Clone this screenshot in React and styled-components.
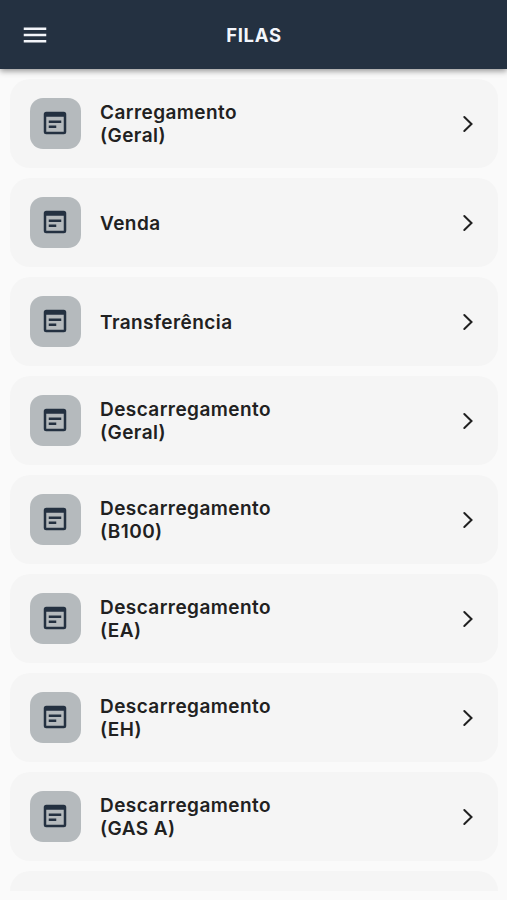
import React from 'react';
import styled, { createGlobalStyle } from 'styled-components';

const GlobalStyle = createGlobalStyle`
  * {
    box-sizing: border-box;
  }

  body {
    margin: 0;
    background: #fafafa;
    font-family: Inter, 'Liberation Sans', sans-serif;
  }
`;

const Screen = styled.div`
  display: flex;
  flex-direction: column;
  height: 900px;
  padding-bottom: 9px;
  overflow: hidden;
`;

const Header = styled.header`
  position: relative;
  z-index: 1;
  flex: none;
  display: grid;
  grid-template-columns: 70px 1fr 69px;
  align-items: center;
  height: 69px;
  padding-top: 1px;
  background: #243141;
  box-shadow: 0 2px 6px rgba(0, 0, 0, 0.42);
`;

const MenuButton = styled.button`
  display: flex;
  justify-content: center;
  padding: 0;
  border: 0;
  background: none;
  color: #f3f5fa;
`;

const Title = styled.h1`
  margin: 0;
  color: #f3f6fc;
  font-size: 18.5px;
  font-weight: 650;
  line-height: 24px;
  letter-spacing: 0.7px;
  text-align: center;
`;

const List = styled.ul`
  flex: 1;
  min-height: 0;
  display: flex;
  flex-direction: column;
  gap: 10px;
  margin: 0;
  padding: 10px 9px 0 10px;
  overflow: hidden;
  list-style: none;
`;

const Card = styled.li`
  flex: none;
  display: flex;
  align-items: center;
  height: 89px;
  padding: 0 15px 0 20px;
  border-radius: 20px;
  background: #f5f5f5;
`;

const IconBox = styled.span`
  flex: none;
  display: flex;
  align-items: center;
  justify-content: center;
  width: 50.5px;
  height: 51px;
  margin-bottom: 1px;
  border-radius: 13px;
  background: #b5babd;
  color: #243141;
`;

const Label = styled.span`
  width: 200px;
  margin-left: 19.5px;
  margin-right: auto;
  padding-top: 1px;
  color: #212121;
  font-size: 19px;
  font-weight: 630;
  line-height: 23px;
  letter-spacing: 0.43px;
`;

const Chevron = styled.svg`
  flex: none;
  width: 30px;
  height: 30px;
  fill: none;
  stroke: #202020;
  stroke-width: 2;
  stroke-linecap: round;
`;

const queues = [
  'Carregamento (Geral)',
  'Venda',
  'Transferência',
  'Descarregamento (Geral)',
  'Descarregamento (B100)',
  'Descarregamento (EA)',
  'Descarregamento (EH)',
  'Descarregamento (GAS A)'
];

function MenuIcon() {
  return (
    <svg width="30" height="30" viewBox="0 0 24 24" fill="currentColor">
      <path d="M3 18h18v-2H3v2zm0-5h18v-2H3v2zm0-7v2h18V6H3z" />
    </svg>
  );
}

function QueueIcon() {
  return (
    <svg width="30" height="30" viewBox="0 0 24 24" fill="currentColor">
      <path d="M19 3H5a2 2 0 0 0-2 2v14a2 2 0 0 0 2 2h14a2 2 0 0 0 2-2V5a2 2 0 0 0-2-2zm0 16H5V7h14v12zm-2-7H7v-2h10v2zm-4 4H7v-2h6v2z" />
    </svg>
  );
}

function QueueItem({ name }) {
  return (
    <Card>
      <IconBox>
        <QueueIcon />
      </IconBox>
      <Label>{name}</Label>
      <Chevron viewBox="0 0 30 30">
        <path d="M11.3 8l7.2 7-7.2 7" />
      </Chevron>
    </Card>
  );
}

function App() {
  return (
    <>
      <GlobalStyle />
      <Screen>
        <Header>
          <MenuButton aria-label="Menu">
            <MenuIcon />
          </MenuButton>
          <Title>FILAS</Title>
        </Header>
        <List>
          {queues.map((name) => (
            <QueueItem key={name} name={name} />
          ))}
          <Card />
        </List>
      </Screen>
    </>
  );
}

export default App;
